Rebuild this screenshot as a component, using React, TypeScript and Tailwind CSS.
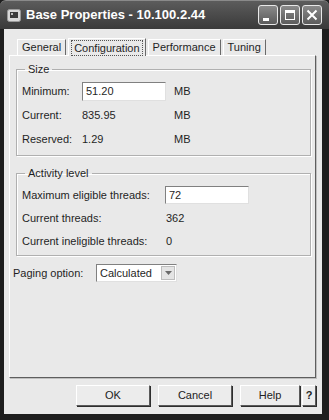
import React from 'react';

const font = "font-['Liberation_Sans',Arial,sans-serif]";

const CaptionButton = ({ children }: { children: React.ReactNode }) => (
  <div className="w-[20px] h-[20px] rounded-[3px] border border-[#e8e8e8] bg-gradient-to-b from-[#8a8a8a] to-[#5c5c5c] flex items-center justify-center">
    {children}
  </div>
);

const Tab = ({ label, active }: { label: string; active?: boolean }) => (
  <div
    className={
      active
        ? 'h-[18px] px-[2px] flex items-center border-l border-t border-[#ffffff] border-r-[#6a6a6a] border-r -mb-px bg-[#e9e9e9] relative'
        : 'h-[16px] px-[4px] flex items-center border-l border-t border-[#ffffff] border-r border-r-[#6a6a6a]'
    }
  >
    {active ? (
      <span className="border border-dotted border-[#555] px-[2px] leading-[14px]">{label}</span>
    ) : (
      <span>{label}</span>
    )}
  </div>
);

const Button = ({ label, w }: { label: string; w: string }) => (
  <div
    className={`${w} h-[21px] flex items-center justify-center border border-t-[#ffffff] border-l-[#ffffff] border-r-[#5a5a5a] border-b-[#5a5a5a] shadow-[1px_1px_0_#2e2e2e] bg-[#ececec] text-[#222]`}
  >
    {label}
  </div>
);

export default function App() {
  return (
    <div className={`${font} w-[329px] h-[420px] bg-[#1e1e1e] flex flex-col text-[11px] text-[#1f1f1f]`}>
      {/* title bar */}
      <div className="h-[29px] shrink-0 bg-gradient-to-b from-[#5c5c5c] to-[#3a3a3a] rounded-t-[6px] flex items-center pl-[7px] pr-[7px] border-t border-[#8a8a8a]">
        <svg width="14" height="13" viewBox="0 0 14 13" className="mr-[5px]">
          <rect x="0.5" y="0.5" width="13" height="12" rx="2" fill="#d8d8d8" stroke="#9a9a9a" />
          <rect x="3" y="3" width="8" height="6" fill="#3a3a3a" />
          <rect x="4" y="4" width="2" height="2" fill="#bdbdbd" />
        </svg>
        <span className="text-white font-bold text-[13px]">Base Properties - 10.100.2.44</span>
        <div className="ml-auto flex gap-[2px]">
          <CaptionButton>
            <div className="w-[6px] h-[3px] bg-white mt-[9px] -ml-[4px]" />
          </CaptionButton>
          <CaptionButton>
            <div className="w-[10px] h-[10px] border border-white border-t-[3px]" />
          </CaptionButton>
          <CaptionButton>
            <svg width="12" height="12" viewBox="0 0 12 12">
              <path d="M1.5 1.5 L10.5 10.5 M10.5 1.5 L1.5 10.5" stroke="#fff" strokeWidth="2" />
            </svg>
          </CaptionButton>
        </div>
      </div>

      {/* client area */}
      <div className="flex-1 mx-[4px] mb-[6px] mr-[7px] bg-[#e9e9e9] flex flex-col">
        {/* tabs */}
        <div className="flex items-end pl-[13px] pt-[9px] gap-[2px]">
          <Tab label="General" />
          <Tab label="Configuration" active />
          <Tab label="Performance" />
          <Tab label="Tuning" />
        </div>

        {/* tab panel */}
        <div className="ml-[5px] mr-[6px] h-[323px] border border-t-[#ffffff] border-l-[#ffffff] border-r-[#5e5e5e] border-b-[#5e5e5e] shadow-[1px_1px_0_#bfbfbf] flex flex-col">
          <fieldset className="ml-[6px] mr-[4px] mt-[7px] border border-[#b0b0b0] shadow-[inset_1px_1px_0_#fff,1px_1px_0_#fff] px-[5px] pb-[6px]">
            <legend className="ml-[3px] px-[3px] leading-[13px]">Size</legend>
            <div className="flex flex-col gap-[5px] mt-[6px]">
              <div className="flex items-center h-[19px]">
                <span className="w-[60px]">Minimum:</span>
                <div className="w-[84px] h-[19px] bg-white border border-t-[#808080] border-l-[#808080] border-r-[#e0e0e0] border-b-[#e0e0e0] flex items-center pl-[3px]">
                  51.20
                </div>
                <span className="ml-[8px]">MB</span>
              </div>
              <div className="flex items-center h-[19px]">
                <span className="w-[60px]">Current:</span>
                <span className="w-[84px]">835.95</span>
                <span className="ml-[8px]">MB</span>
              </div>
              <div className="flex items-center h-[19px]">
                <span className="w-[60px]">Reserved:</span>
                <span className="w-[84px]">1.29</span>
                <span className="ml-[8px]">MB</span>
              </div>
            </div>
          </fieldset>

          <fieldset className="ml-[6px] mr-[4px] mt-[11px] border border-[#b0b0b0] shadow-[inset_1px_1px_0_#fff,1px_1px_0_#fff] px-[5px] pb-[5px]">
            <legend className="ml-[3px] px-[3px] leading-[13px]">Activity level</legend>
            <div className="flex flex-col gap-[5px] mt-[6px]">
              <div className="flex items-center h-[18px]">
                <span className="w-[143px]">Maximum eligible threads:</span>
                <div className="w-[84px] h-[18px] bg-white border border-t-[#808080] border-l-[#808080] border-r-[#e0e0e0] border-b-[#e0e0e0] flex items-center pl-[3px]">
                  72
                </div>
              </div>
              <div className="flex items-center h-[18px]">
                <span className="w-[144px]">Current threads:</span>
                <span>362</span>
              </div>
              <div className="flex items-center h-[18px]">
                <span className="w-[144px]">Current ineligible threads:</span>
                <span>0</span>
              </div>
            </div>
          </fieldset>

          <div className="flex items-center ml-[3px] mt-[8px] h-[18px]">
            <span className="w-[83px]">Paging option:</span>
            <div className="w-[81px] h-[18px] bg-white border border-t-[#808080] border-l-[#808080] border-r-[#e0e0e0] border-b-[#e0e0e0] flex items-center pl-[3px] pr-[1px]">
              <span className="flex-1">Calculated</span>
              <div className="w-[14px] h-[14px] bg-[#e4e4e4] border border-[#bdbdbd] flex items-center justify-center">
                <svg width="7" height="4" viewBox="0 0 7 4">
                  <path d="M0 0 H7 L3.5 4 Z" fill="#6a6a6a" />
                </svg>
              </div>
            </div>
          </div>
        </div>

        {/* buttons */}
        <div className="flex justify-end items-center mt-[7px] mr-[6px] gap-[8px]">
          <Button label="OK" w="w-[74px]" />
          <Button label="Cancel" w="w-[74px]" />
          <div className="flex gap-[2px]">
            <Button label="Help" w="w-[60px]" />
            <div className="w-[14px] h-[21px] flex items-center justify-center border border-t-[#ffffff] border-l-[#ffffff] border-r-[#5a5a5a] border-b-[#5a5a5a] shadow-[1px_1px_0_#2e2e2e] bg-[#ececec] font-bold">
              ?
            </div>
          </div>
        </div>
      </div>
    </div>
  );
}
